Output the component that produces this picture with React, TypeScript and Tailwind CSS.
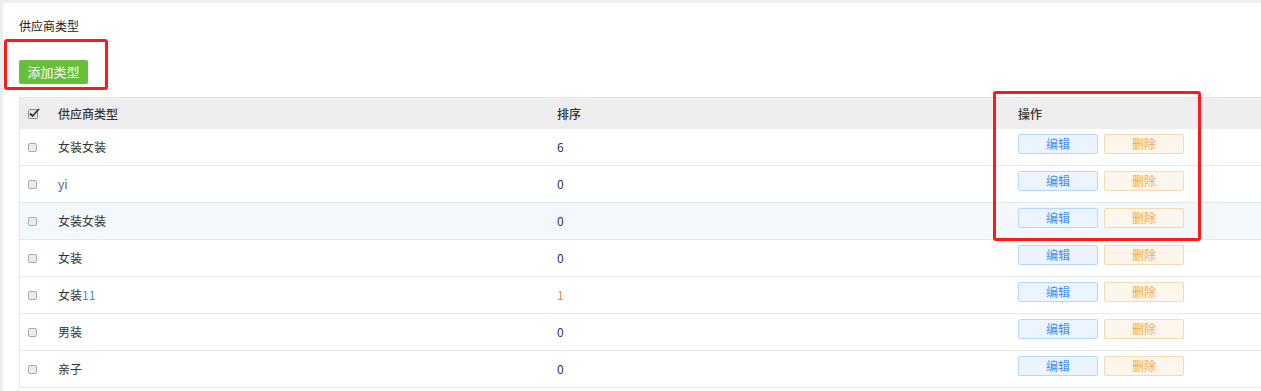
import React from 'react';

type Row = { name: React.ReactNode; sort: React.ReactNode; alt?: boolean };

const rows: Row[] = [
  { name: '女装女装', sort: <span className="text-[#2a2f66]">6</span> },
  { name: <span className="text-[#56617e]">yi</span>, sort: <span className="text-[#2a2f66]">0</span> },
  { name: '女装女装', sort: <span className="text-[#2a2f66]">0</span>, alt: true },
  { name: '女装', sort: <span className="text-[#2a2f66]">0</span> },
  {
    name: (
      <>
        女装<span className="text-[#3d8fd6]">11</span>
      </>
    ),
    sort: <span className="text-[#d9922e]">1</span>,
  },
  { name: '男装', sort: <span className="text-[#2a2f66]">0</span> },
  { name: '亲子', sort: <span className="text-[#2a2f66]">0</span> },
];

const Box = () => (
  <div className="w-[9px] h-[9px] rounded-[2px] border border-[#a9a9a9] bg-[#ececec]" />
);

const CheckedBox = () => (
  <svg width="12" height="11" viewBox="0 0 12 11">
    <rect x="0.5" y="1.5" width="9" height="9" rx="1" fill="#e4e4e4" stroke="#8a8a8a" />
    <path d="M2 5.5 L4.5 8 L11 1" fill="none" stroke="#333" strokeWidth="1.8" />
  </svg>
);

const App = () => {
  return (
    <div
      className="relative min-h-screen bg-[#efefef] pt-[3px] pl-[3px] text-[12px] text-[#333]"
      style={{ fontFamily: '"Noto Sans CJK SC", "Noto Sans", sans-serif' }}
    >
      <div className="bg-white min-h-[388px] pt-[14px] pl-[16px] overflow-hidden">
        <div className="leading-[18px] text-[12px] text-[#222]">供应商类型</div>

        <button className="mt-[25px] h-[24px] w-[69px] rounded-[2px] bg-[#67bf3c] text-white text-[13px] leading-[24px]">
          添加类型
        </button>

        <div className="mt-[13px] border-l border-[#e6e6e6]">
          <div className="grid grid-cols-[38px_499px_461px_1fr] h-[32px] items-center bg-[#eeeeee] border-t border-[#e2e2e2] font-medium text-[#333]">
            <div className="pl-[8px] flex items-center">
              <CheckedBox />
            </div>
            <div>供应商类型</div>
            <div>排序</div>
            <div>操作</div>
          </div>

          {rows.map((r, i) => (
            <div
              key={i}
              className={`grid grid-cols-[38px_499px_461px_1fr] h-[37px] items-center border-b border-[#e8e8e8] ${
                r.alt ? 'bg-[#f3f8fc]' : 'bg-white'
              }`}
            >
              <div className="pl-[8px] flex items-center">
                <Box />
              </div>
              <div className="text-[#333]">{r.name}</div>
              <div>{r.sort}</div>
              <div className="flex gap-[6px] pb-[7px]">
                <button className="w-[80px] h-[20px] rounded-[2px] border border-[#b3d8ff] bg-[#ecf5ff] text-[#3f8ef0] text-[12px] leading-[18px]">
                  编辑
                </button>
                <button className="w-[80px] h-[20px] rounded-[2px] border border-[#f5dab1] bg-[#fdf6ec] text-[#f0a656] text-[12px] leading-[18px]">
                  删除
                </button>
              </div>
            </div>
          ))}
        </div>
      </div>

      <div className="absolute left-[4px] top-[39px] w-[104px] h-[51px] border-[3px] border-[#ff1a1a] rounded-[3px]" />
      <div className="absolute left-[993px] top-[91px] w-[208px] h-[150px] border-[3px] border-[#ff1a1a] rounded-[3px]" />
    </div>
  );
};

export default App;
